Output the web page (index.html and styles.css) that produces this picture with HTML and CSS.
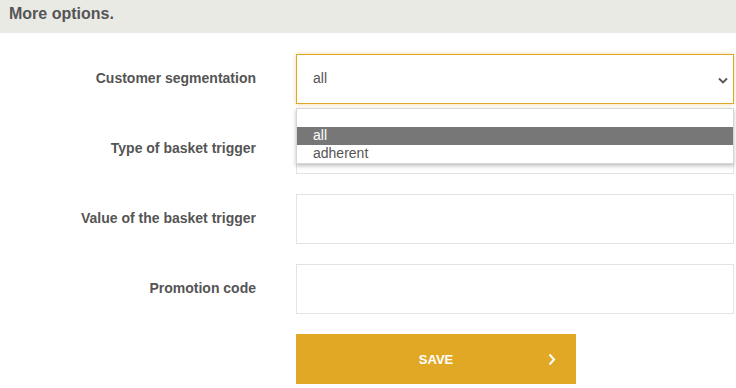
FILE: index.html
```html
<!DOCTYPE html>
<html lang="en">
<head>
    <meta charset="UTF-8">
    <title>More options</title>
    <link rel="stylesheet" href="styles.css">
</head>
<body>
    <div class="section-title">More options.</div>

    <form class="options-form">
        <div class="form-row">
            <label class="form-label">Customer segmentation</label>
            <div class="field select-field">
                <div class="fake-select focused">
                    <span>all</span>
                    <svg class="chevron" width="10" height="7" viewBox="0 0 10 7"><path d="M1 1.5 L5 5.5 L9 1.5" fill="none" stroke="#555" stroke-width="1.8"/></svg>
                </div>
                <ul class="select-menu">
                    <li class="empty"></li>
                    <li class="active">all</li>
                    <li>adherent</li>
                </ul>
            </div>
        </div>

        <div class="form-row">
            <label class="form-label">Type of basket trigger</label>
            <div class="field"><input class="text-input" type="text"></div>
        </div>

        <div class="form-row">
            <label class="form-label">Value of the basket trigger</label>
            <div class="field"><input class="text-input" type="text"></div>
        </div>

        <div class="form-row">
            <label class="form-label">Promotion code</label>
            <div class="field"><input class="text-input" type="text"></div>
        </div>

        <div class="form-row">
            <span></span>
            <button type="button" class="save-button">
                <span>SAVE</span>
                <svg class="arrow" width="8" height="13" viewBox="0 0 8 13"><path d="M1.5 1.5 L6 6.5 L1.5 11.5" fill="none" stroke="#fff" stroke-width="2"/></svg>
            </button>
        </div>
    </form>
</body>
</html>
```

FILE: styles.css
```css
* {
    margin: 0;
    padding: 0;
    box-sizing: border-box;
}

body {
    font-family: Arial, "Liberation Sans", sans-serif;
    color: #555;
    background: #fff;
    width: 736px;
}

.section-title {
    height: 33px;
    background: #eaeae5;
    padding: 5px 9px 0;
    font-size: 16px;
    font-weight: bold;
    color: #555;
}

.options-form {
    padding: 21px 2px 0 0;
    display: flex;
    flex-direction: column;
    gap: 20px;
}

.form-row {
    display: grid;
    grid-template-columns: 256px 438px;
    column-gap: 40px;
    align-items: center;
}

.form-label {
    text-align: right;
    font-size: 14px;
    font-weight: bold;
    color: #555;
    padding-bottom: 3px;
}

.field {
    position: relative;
}

.text-input,
.fake-select {
    width: 438px;
    height: 50px;
    border: 1px solid #e3e3e3;
    background: #fff;
    font-family: inherit;
    font-size: 14px;
    color: #555;
    outline: none;
}

.fake-select {
    display: flex;
    align-items: center;
    justify-content: space-between;
    padding: 0 5px 2px 16px;
}

.fake-select .chevron {
    margin-top: 4px;
}

.fake-select.focused {
    border-color: #e0a82a;
    box-shadow: 0 0 4px rgba(224, 168, 42, 0.45);
}

.select-menu {
    position: absolute;
    top: 54px;
    left: 0;
    width: 438px;
    list-style: none;
    background: #fff;
    border: 1px solid #d6d6d6;
    box-shadow: 0 2px 4px rgba(0, 0, 0, 0.25);
    z-index: 5;
    font-size: 14px;
    color: #555;
}

.select-menu li {
    height: 18px;
    line-height: 17px;
    padding-left: 16px;
}

.select-menu li.active {
    background: #777;
    color: #fff;
}

.save-button {
    width: 280px;
    height: 50px;
    border: none;
    background: #e1a826;
    color: #fff;
    font-family: inherit;
    font-size: 13px;
    font-weight: bold;
    display: flex;
    align-items: center;
    justify-content: center;
    position: relative;
}

.save-button .arrow {
    position: absolute;
    right: 20px;
    top: 19px;
}
```
